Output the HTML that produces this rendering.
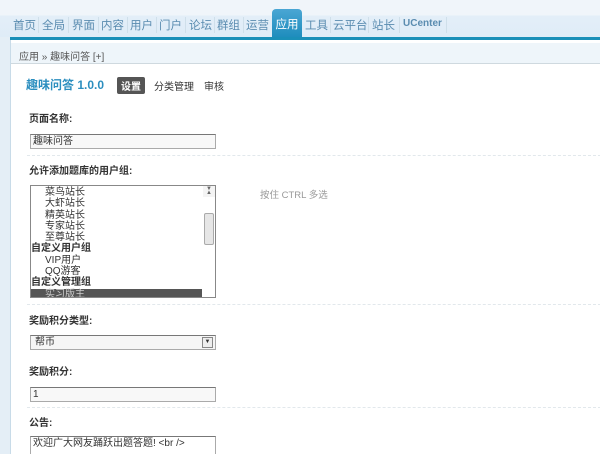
<!DOCTYPE html>
<html><head><meta charset="utf-8"><style>
*{margin:0;padding:0;box-sizing:border-box}
html,body{width:600px;height:454px;overflow:hidden}
body{background:#fff;font-family:"Liberation Sans","Noto Sans CJK SC",sans-serif;font-size:12px;color:#333;position:relative}
.top{position:absolute;left:0;top:0;width:600px;height:37px;background:linear-gradient(#f0f5fa 0,#f0f5fa 15px,#e3eef8 16px,#dfecf7 37px)}
.nav{position:absolute;top:15px;left:0;height:22px;font-size:11.5px;color:#5a8cb0}
.nav span{position:absolute;top:2px;white-space:nowrap}
.nav span.sep{width:1px;height:16px;background:#cfdfea;top:2px}
.act{position:absolute;left:272px;top:9px;width:30px;height:29px;background:linear-gradient(#4aa6d4,#1d8cbc);border-radius:4px 4px 0 0;color:#fff;font-size:11.5px;text-align:center;line-height:24px;padding-top:4px}
.bl{position:absolute;left:10px;top:37px;width:590px;height:3px;background:#1a8fb8}
.side{position:absolute;left:0;top:37px;width:10px;height:417px;background:#e4eef6}
.panel{position:absolute;left:10px;top:40px;width:590px;height:414px;border-left:1px solid #c8dbe8;background:#fff}
.crumb{position:absolute;left:0;top:3px;width:590px;height:21px;background:#eef5fa;border-bottom:1px solid #cfd9df;font-size:10px;color:#555;padding:5px 8px}
.title{position:absolute;left:15px;top:36px;font-size:12px;font-weight:bold;color:#2b8ebf}
.tab{position:absolute;top:37px;font-size:10px;color:#333;padding:1px 4px}
.tab.on{background:#555;color:#fff;border-radius:2px;font-weight:bold}
.lbl{position:absolute;left:18px;font-size:10px;font-weight:bold;color:#333}
.inp{position:absolute;left:19px;width:186px;height:15px;border:1px solid #aaa;border-top-color:#777;background:#f8f8f8;font-size:10px;padding:0 2px;line-height:13px}
.dash{position:absolute;left:16px;width:574px;border-top:1px dashed #e2e8ec}
.sel{position:absolute;left:19px;top:145px;width:186px;height:113px;border:1px solid #888;background:#fff;font-size:10px;line-height:11.3px;overflow:hidden}
.sel div{height:11.3px;white-space:nowrap}
.sb{position:absolute;right:0;top:0;width:12px;height:111px;background:#f4f4f4}
</style></head><body>
<div class="top"></div>
<div class="nav">
<span style="left:13px">首页</span><span class="sep" style="left:38px"></span>
<span style="left:42px">全局</span><span class="sep" style="left:68px"></span>
<span style="left:72px">界面</span><span class="sep" style="left:98px"></span>
<span style="left:101px">内容</span><span class="sep" style="left:127px"></span>
<span style="left:130px">用户</span><span class="sep" style="left:156px"></span>
<span style="left:159px">门户</span><span class="sep" style="left:185px"></span>
<span style="left:189px">论坛</span><span class="sep" style="left:214px"></span>
<span style="left:217px">群组</span><span class="sep" style="left:243px"></span>
<span style="left:246px">运营</span>
<span style="left:305px">工具</span><span class="sep" style="left:330px"></span>
<span style="left:333px">云平台</span><span class="sep" style="left:368px"></span>
<span style="left:372px">站长</span><span class="sep" style="left:399px"></span>
<span style="left:403px;font-size:10px;font-weight:bold;top:3px">UCenter</span><span class="sep" style="left:446px"></span>
</div>
<div class="act">应用</div>
<div class="side"></div>
<div class="bl"></div>
<div class="panel">
<div class="crumb">应用 » 趣味问答 [+]</div>
<div class="title">趣味问答 1.0.0</div>
<div class="tab on" style="left:106px">设置</div>
<div class="tab" style="left:139px">分类管理</div>
<div class="tab" style="left:189px">审核</div>
<div class="lbl" style="top:70px">页面名称:</div>
<div class="inp" style="top:94px">趣味问答</div>
<div class="dash" style="top:115px"></div>
<div class="lbl" style="top:122px">允许添加题库的用户组:</div>
<div class="sel">
<div style="padding-left:14px;margin-top:1px">菜鸟站长</div>
<div style="padding-left:14px">大虾站长</div>
<div style="padding-left:14px">精英站长</div>
<div style="padding-left:14px">专家站长</div>
<div style="padding-left:14px">至尊站长</div>
<div style="font-weight:bold">自定义用户组</div>
<div style="padding-left:14px">VIP用户</div>
<div style="padding-left:14px">QQ游客</div>
<div style="font-weight:bold">自定义管理组</div>
<div style="padding-left:14px;background:#555;color:#ccc;width:171px">实习版主</div>
<div class="sb"><div style="position:absolute;top:2px;left:3px;font-size:6px;color:#666">▲</div><div style="position:absolute;top:27px;left:1px;width:10px;height:32px;background:#e6e6e6;border:1px solid #aaa;border-radius:2px"></div><div style="position:absolute;bottom:2px;left:3px;font-size:6px;color:#666">▼</div></div>
</div>
<div style="position:absolute;left:249px;top:147px;font-size:9.5px;color:#999">按住 CTRL 多选</div>
<div class="dash" style="top:264px"></div>
<div class="lbl" style="top:272px">奖励积分类型:</div>
<div class="inp" style="top:295px;background:#f6f6f6;padding-left:4px">帮币<div style="position:absolute;right:2px;top:1px;width:11px;height:11px;border:1px solid #888;background:#eee;font-size:6px;line-height:9px;text-align:center">▼</div></div>
<div class="lbl" style="top:323px">奖励积分:</div>
<div class="inp" style="top:347px">1</div>
<div class="dash" style="top:367px"></div>
<div class="lbl" style="top:374px">公告:</div>
<div class="inp" style="top:396px;height:30px;background:#fff">欢迎广大网友踊跃出题答题! &lt;br /&gt;</div>
</div>
</body></html>
